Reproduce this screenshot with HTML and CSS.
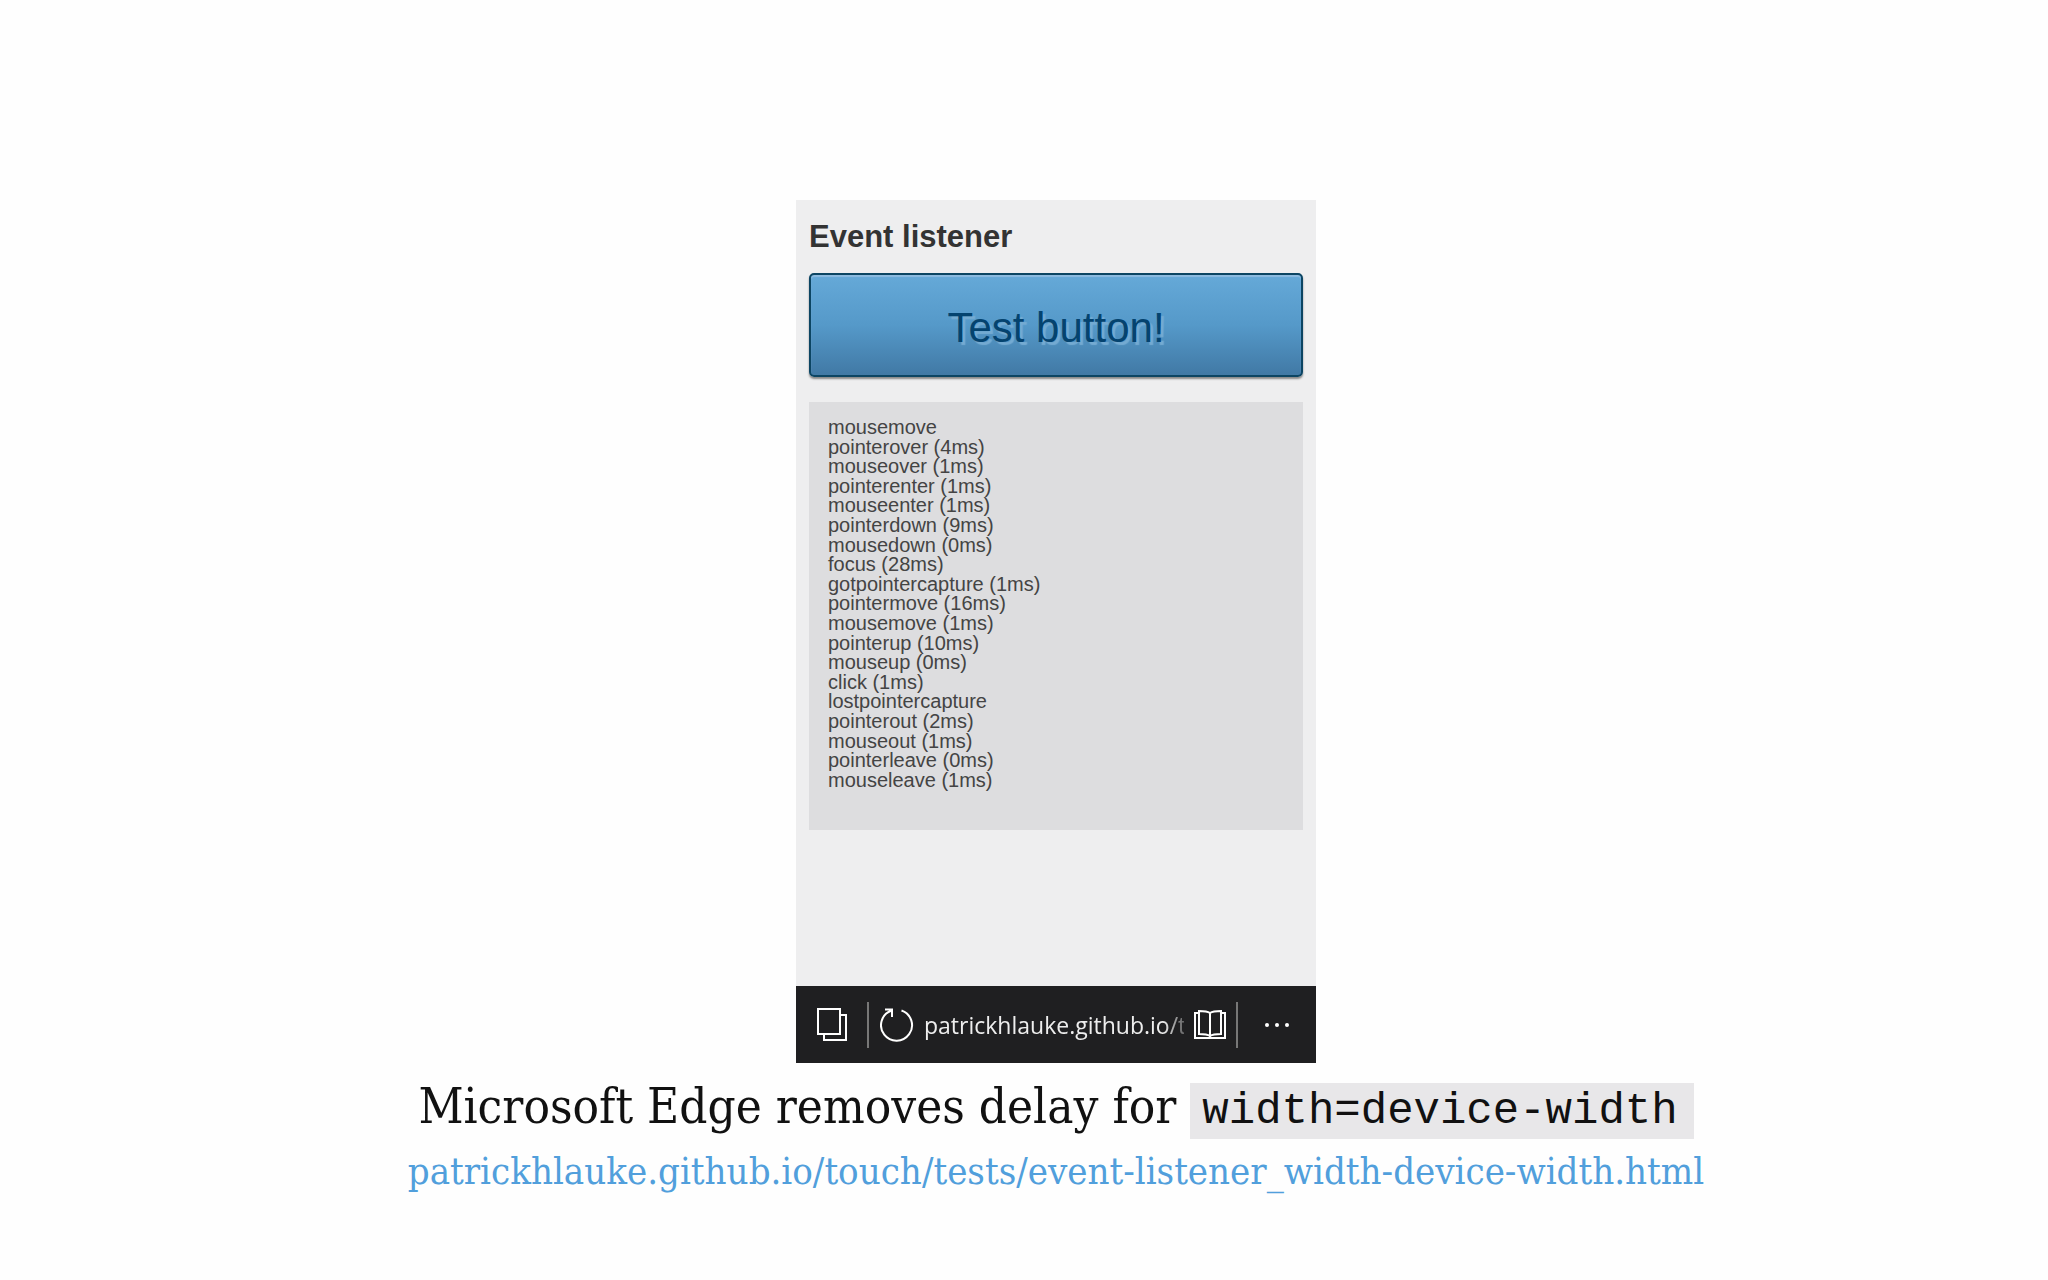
FILE: index.html
```html
<!DOCTYPE html>
<html lang="en">
<head>
    <meta charset="UTF-8">
    <meta name="viewport" content="width=device-width, initial-scale=1.0">
    <title>Microsoft Edge removes delay for width=device-width</title>
    <link rel="stylesheet" href="styles.css">
</head>
<body>
    <main class="slide">
        <section class="phone">
            <div class="page">
                <h2>Event listener</h2>
                <button class="test-button" type="button">Test button!</button>
                <ul class="log">
                    <li>mousemove</li>
                    <li>pointerover (4ms)</li>
                    <li>mouseover (1ms)</li>
                    <li>pointerenter (1ms)</li>
                    <li>mouseenter (1ms)</li>
                    <li>pointerdown (9ms)</li>
                    <li>mousedown (0ms)</li>
                    <li>focus (28ms)</li>
                    <li>gotpointercapture (1ms)</li>
                    <li>pointermove (16ms)</li>
                    <li>mousemove (1ms)</li>
                    <li>pointerup (10ms)</li>
                    <li>mouseup (0ms)</li>
                    <li>click (1ms)</li>
                    <li>lostpointercapture</li>
                    <li>pointerout (2ms)</li>
                    <li>mouseout (1ms)</li>
                    <li>pointerleave (0ms)</li>
                    <li>mouseleave (1ms)</li>
                </ul>
            </div>
            <nav class="toolbar">
                <button class="tabs" type="button" aria-label="Tabs">
                    <svg width="30" height="34" viewBox="0 0 30 34">
                        <path d="M1 1H23V26H1ZM23 7H29V32H7V26"/>
                    </svg>
                </button>
                <button class="reload" type="button" aria-label="Refresh">
                    <svg width="34" height="34" viewBox="0 0 34 34">
                        <path d="M21.500 2.500A15.500 15.500 0 1 1 11 2.700M5 1.500H12V9"/>
                    </svg>
                </button>
                <input class="address" type="text" aria-label="Address" value="patrickhlauke.github.io/touch" readonly>
                <button class="reading" type="button" aria-label="Reading view">
                    <svg width="32" height="30" viewBox="0 0 32 30">
                        <path d="M16 3V27M16 3C13 1 9 1 5 1V24C9 24 13 24 16 26C19 24 23 24 27 24V1C23 1 19 1 16 3M5 3H1V28H31V3H27"/>
                    </svg>
                </button>
                <button class="more" type="button" aria-label="More">
                    <svg width="26" height="4" viewBox="0 0 26 4">
                        <circle cx="3" cy="2" r="2"/>
                        <circle cx="13" cy="2" r="2"/>
                        <circle cx="23" cy="2" r="2"/>
                    </svg>
                </button>
            </nav>
        </section>
        <h1>Microsoft Edge removes delay for <code>width=device-width</code></h1>
        <p><a href="https://patrickhlauke.github.io/touch/tests/event-listener_width-device-width.html">patrickhlauke.github.io/touch/tests/event-listener_width-device-width.html</a></p>
    </main>
</body>
</html>
```

FILE: styles.css
```css
* {
    box-sizing: border-box;
}

body {
    margin: 0;
    background: #fefefe;
    color: #111;
    font-family: "DejaVu Serif Condensed", "DejaVu Serif", serif;
}

.slide {
    display: flex;
    flex-direction: column;
    align-items: center;
    min-height: 100vh;
    padding: 200px 0 0 64px;
}

.phone {
    width: 100%;
    max-width: 520px;
    background: #eeeeef;
    font-family: "Liberation Sans", Arial, sans-serif;
}

.page {
    padding: 18px 13px 156px;
}

h2 {
    margin: 0 0 18px;
    color: #333;
    font-size: 31px;
    line-height: 37px;
}

.test-button {
    display: block;
    width: 100%;
    padding: 30px 0 24px;
    border: 2px solid #0c4563;
    border-radius: 5px;
    background: linear-gradient(#65a9d8, #5599c9 50%, #4179a5);
    box-shadow: 0 2px 2px #888, inset 0 2px 1px #8dbbe0;
    color: #04436f;
    font-family: inherit;
    font-size: 42px;
    line-height: 46px;
    text-shadow: 3px 3px 1px #75abd2;
}

.log {
    margin: 25px 0 0;
    padding: 16px 19px 40px;
    background: #dddddf;
    color: #444;
    font-size: 20px;
    line-height: 0.98;
    list-style: none;
}

.toolbar {
    display: flex;
    align-items: center;
    height: 77px;
    background: #1f1f21;
}

.toolbar button {
    display: flex;
    align-items: center;
    justify-content: center;
    height: 46px;
    padding: 0;
    border: 0;
    background: none;
}

.toolbar svg {
    fill: none;
    stroke: #fff;
    stroke-width: 2;
}

.toolbar .tabs {
    width: 73px;
    border-right: 2px solid #777;
}

.toolbar .reload {
    width: 55px;
}

.address {
    flex: 1;
    min-width: 0;
    padding: 0;
    border: 0;
    background: none;
    color: #eee;
    font-family: "Open Sans", sans-serif;
    font-size: 23px;
    mask-image: linear-gradient(to right, #000 92%, transparent 104%);
}

.toolbar .reading {
    width: 54px;
    border-right: 2px solid #777;
}

.toolbar .more {
    width: 78px;
}

.toolbar .more svg {
    fill: #fff;
    stroke: none;
}

h1 {
    margin: 12px 0 0;
    font-size: 49px;
    font-weight: normal;
    line-height: 64px;
}

code {
    padding: 3px 16px 3px 12px;
    background: #e8e7e9;
    font-family: "Liberation Mono", monospace;
    font-size: 44px;
}

p {
    margin: 4px 0 0;
    font-size: 38px;
    line-height: 48px;
}

a {
    color: #519fdc;
    text-decoration: none;
}
```
